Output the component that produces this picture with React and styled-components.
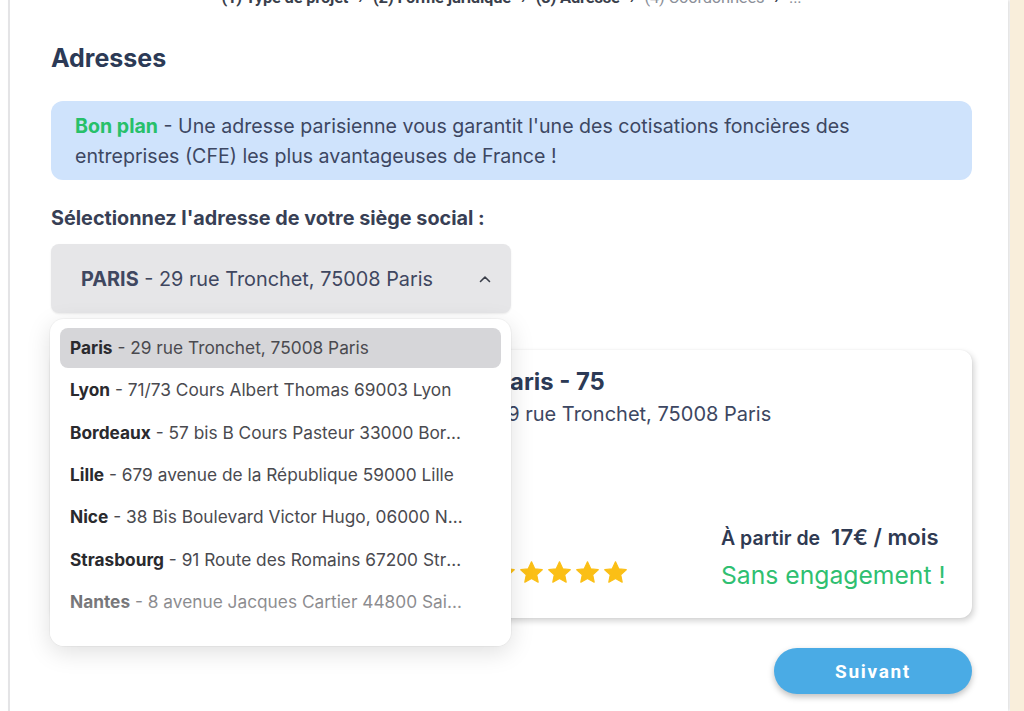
import React from "react";
import styled, { createGlobalStyle } from "styled-components";

const Global = createGlobalStyle`
  html, body { margin: 0; padding: 0; background: #ffffff; }
  body { font-family: Inter, "Noto Sans", sans-serif; overflow: hidden; }
  * { box-sizing: border-box; }
`;

const Screen = styled.div`
  display: flex;
  height: 711px;
  overflow: hidden;
  background: #ffffff;
`;

const Page = styled.main`
  margin-left: 8px;
  width: 1000px;
  flex: none;
  border-left: 2px solid #e4e4e6;
  box-shadow: 2px 0 3px rgba(0, 0, 0, 0.12);
  background: #ffffff;
  padding: 0 36px 0 41px;
  display: flex;
  flex-direction: column;
`;

const Side = styled.aside`
  flex: 1;
  background: #f9eedb;
  margin-left: 2px;
`;

const Breadcrumb = styled.nav`
  margin-top: -12px;
  height: 18px;
  display: flex;
  justify-content: center;
  align-items: center;
  gap: 10px;
  font-family: Roboto, sans-serif;
  font-size: 16.5px;
  font-weight: 700;
  color: #3a3f4c;
  letter-spacing: -0.2px;
`;

const Crumb = styled.span`
  color: ${(p) => (p.$muted ? "#8b8f99" : "#3a3f4c")};
  font-weight: ${(p) => (p.$muted ? 400 : 700)};
`;

const Title = styled.h1`
  margin: 37px 0 0;
  font-size: 25px;
  line-height: 30px;
  font-weight: 700;
  color: #2c3a56;
`;

const Tip = styled.div`
  margin-top: 28px;
  background: #cfe3fc;
  border-radius: 12px;
  padding: 10px 60px 9px 24px;
  font-size: 19.6px;
  line-height: 30px;
  color: #3d4762;
`;

const Green = styled.strong`
  color: #27c06a;
  font-weight: 700;
`;

const Label = styled.div`
  margin-top: 26px;
  font-size: 19.8px;
  line-height: 24px;
  font-weight: 700;
  color: #383f55;
`;

const SelectWrap = styled.div`
  position: relative;
  margin-top: 14px;
  width: 460px;
`;

const SelectBox = styled.div`
  height: 69px;
  background: #e6e6e8;
  border-radius: 8px;
  box-shadow: 0 1px 2px rgba(0, 0, 0, 0.08);
  display: flex;
  align-items: center;
  justify-content: space-between;
  padding: 0 20px 0 30px;
  font-size: 19.85px;
  color: #3f4760;
  b { font-weight: 700; }
`;

const Menu = styled.ul`
  position: absolute;
  z-index: 5;
  top: calc(100% + 6px);
  left: -1px;
  width: 461px;
  height: 327px;
  margin: 0;
  padding: 9px 10px;
  list-style: none;
  background: #ffffff;
  border-radius: 14px;
  box-shadow: 0 6px 24px rgba(0, 0, 0, 0.13), 0 0 0 1px rgba(0, 0, 0, 0.03);
  overflow: hidden;
  display: flex;
  flex-direction: column;
  gap: 2.33px;
  &::after {
    content: "";
    position: absolute;
    left: 0;
    right: 0;
    bottom: 0;
    height: 58px;
    background: linear-gradient(to bottom, rgba(255,255,255,0.28) 0%, rgba(255,255,255,0.4) 35%, rgba(255,255,255,1) 78%);
  }
`;

const Option = styled.li`
  flex: none;
  height: 40px;
  line-height: 40px;
  padding: 0 36px 0 10px;
  border-radius: 8px;
  background: ${(p) => (p.$active ? "#d6d6d9" : "transparent")};
  font-size: 17.3px;
  color: #4a4a4f;
  white-space: nowrap;
  overflow: hidden;
  text-overflow: ellipsis;
  b { font-weight: 700; color: #2a2a2e; }
`;

const Card = styled.section`
  margin-top: 37px;
  height: 268px;
  background: #ffffff;
  border-radius: 12px;
  box-shadow: 2px 3px 6px rgba(0, 0, 0, 0.18), 0 0 2px rgba(0, 0, 0, 0.06);
  padding: 20px 24px 28px;
  display: grid;
  grid-template-columns: 400px 1fr;
  column-gap: 20px;
`;

const Photo = styled.div`
  border-radius: 10px;
  background: #e9edf3;
`;

const CardBody = styled.div`
  display: flex;
  flex-direction: column;
`;

const CardTitle = styled.h2`
  margin: 0;
  font-size: 23.8px;
  line-height: 24px;
  font-weight: 700;
  color: #2c3a56;
`;

const CardAddress = styled.p`
  margin: 7px 0 0;
  font-size: 20px;
  line-height: 26px;
  color: #3d4762;
`;

const CardFooter = styled.div`
  margin-top: auto;
  display: flex;
  justify-content: space-between;
  align-items: flex-end;
`;

const Stars = styled.div`
  display: flex;
  gap: 3px;
  margin-left: -4px;
  margin-bottom: 5px;
`;

const Price = styled.div`
  display: flex;
  flex-direction: column;
  gap: 7px;
  width: 227px;
`;

const From = styled.div`
  font-size: 19.5px;
  line-height: 30px;
  font-weight: 600;
  color: #2f3a52;
  white-space: nowrap;
  span { font-size: 22px; margin-left: 11px; }
`;

const NoCommit = styled.div`
  font-size: 24.7px;
  line-height: 30px;
  color: #2fbf71;
  white-space: nowrap;
`;

const Actions = styled.div`
  margin-top: 30px;
  display: flex;
  justify-content: flex-end;
`;

const NextButton = styled.button`
  width: 198px;
  height: 46px;
  border: none;
  border-radius: 23px;
  background: #4aabe5;
  box-shadow: 0 3px 6px rgba(0, 0, 0, 0.25);
  color: #ffffff;
  font-family: Roboto, sans-serif;
  font-size: 19px;
  font-weight: 700;
  letter-spacing: 1.7px;
`;

const Star = () => (
  <svg width="25" height="25" viewBox="0 0 24 24">
    <path
      d="M12 1.8l3.1 6.6 7.2.9-5.3 4.9 1.4 7.1L12 17.8l-6.4 3.5 1.4-7.1L1.7 9.3l7.2-.9z"
      fill="#fbbf16"
      stroke="#fbbf16"
      strokeWidth="1.2"
      strokeLinejoin="round"
    />
  </svg>
);

const Chevron = () => (
  <svg width="12" height="8" viewBox="0 0 12 8">
    <path d="M1.5 6.5L6 2l4.5 4.5" fill="none" stroke="#3b3f4a" strokeWidth="1.6" strokeLinecap="round" strokeLinejoin="round" />
  </svg>
);

const options = [
  ["Paris", "29 rue Tronchet, 75008 Paris"],
  ["Lyon", "71/73 Cours Albert Thomas 69003 Lyon"],
  ["Bordeaux", "57 bis B Cours Pasteur 33000 Bordeaux"],
  ["Lille", "679 avenue de la République 59000 Lille"],
  ["Nice", "38 Bis Boulevard Victor Hugo, 06000 Nice"],
  ["Strasbourg", "91 Route des Romains 67200 Strasbourg"],
  ["Nantes", "8 avenue Jacques Cartier 44800 Saint-Herblain"],
  ["Marseille", "40 rue de la République 13001 Marseille"],
];

export default function App() {
  return (
    <>
      <Global />
      <Screen>
        <Page>
          <Breadcrumb>
            <Crumb>(1) Type de projet</Crumb>
            <Crumb>›</Crumb>
            <Crumb>(2) Forme juridique</Crumb>
            <Crumb>›</Crumb>
            <Crumb>(3) Adresse</Crumb>
            <Crumb>›</Crumb>
            <Crumb $muted>(4) Coordonnées</Crumb>
            <Crumb>›</Crumb>
            <Crumb $muted>...</Crumb>
          </Breadcrumb>
          <Title>Adresses</Title>
          <Tip>
            <Green>Bon plan</Green> - Une adresse parisienne vous garantit l'une des cotisations foncières des
            entreprises (CFE) les plus avantageuses de France !
          </Tip>
          <Label>Sélectionnez l'adresse de votre siège social :</Label>
          <SelectWrap>
            <SelectBox>
              <span>
                <b>PARIS</b> - 29 rue Tronchet, 75008 Paris
              </span>
              <Chevron />
            </SelectBox>
            <Menu>
              {options.map(([city, addr], i) => (
                <Option key={city} $active={i === 0}>
                  <b>{city}</b> - {addr}
                </Option>
              ))}
            </Menu>
          </SelectWrap>
          <Card>
            <Photo />
            <CardBody>
              <CardTitle>Paris - 75</CardTitle>
              <CardAddress>29 rue Tronchet, 75008 Paris</CardAddress>
              <CardFooter>
                <Stars>
                  <Star />
                  <Star />
                  <Star />
                  <Star />
                  <Star />
                </Stars>
                <Price>
                  <From>
                    À partir de<span>17€ / mois</span>
                  </From>
                  <NoCommit>Sans engagement !</NoCommit>
                </Price>
              </CardFooter>
            </CardBody>
          </Card>
          <Actions>
            <NextButton>Suivant</NextButton>
          </Actions>
        </Page>
        <Side />
      </Screen>
    </>
  );
}
